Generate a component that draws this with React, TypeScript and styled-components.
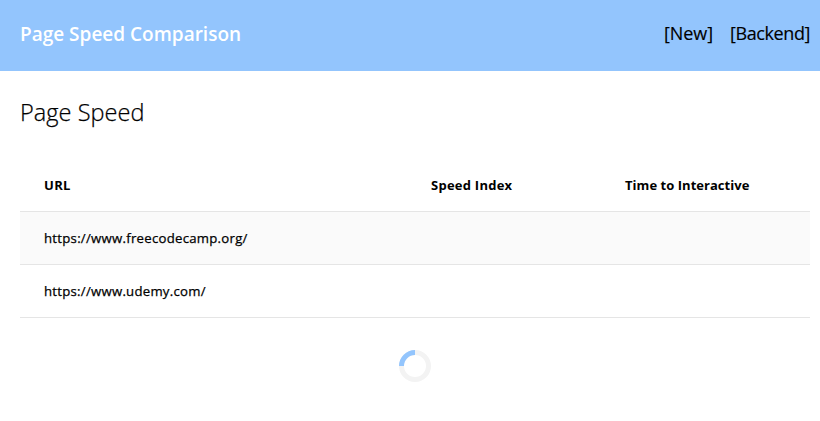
import React from "react";
import styled, { createGlobalStyle } from "styled-components";

const GlobalStyle = createGlobalStyle`
  * { box-sizing: border-box; }
  body { margin: 0; background: #fff; color: #000; font-family: "Open Sans", "Noto Sans", sans-serif; overflow: hidden; }
`;
const Header = styled.header`
  display: flex; justify-content: space-between; align-items: center;
  height: 71px; padding: 0 10px 4px 20px; background: #93c5fd;
`;
const Label = styled.span<{ $tracking?: number }>`
  white-space: nowrap;
  letter-spacing: ${(p) => p.$tracking ?? 0}px;
`;
const Brand = styled(Label)`color: #fff; font-size: 19px; font-weight: 600; line-height: 28px;`;
const Nav = styled.nav`display: flex; gap: 17px; padding-bottom: 1px;`;
const NavLink = styled(Label)`
  font-size: 18px; line-height: 28px; -webkit-text-stroke: 0.15px currentColor;
`;
const Main = styled.main`padding: 25px 10px 0 20px;`;
const Title = styled.h1`
  margin: 0 0 31px; font-size: 23.5px; font-weight: 300; line-height: 32px;
  letter-spacing: 0.05px; -webkit-text-stroke: 0.25px currentColor;
`;
const Row = styled.div<{ $shade?: boolean }>`
  display: grid; grid-template-columns: 387px 194px 1fr; align-items: center;
  height: 53px; padding: 0 24px; border-bottom: 1px solid #e5e5e5;
  background: ${(p) => (p.$shade ? "#fafafa" : "#fff")};
`;
const HeadCell = styled(Label)`font-size: 13px; font-weight: 700;`;
const Cell = styled(Label)`
  font-size: 13.2px; font-weight: 400; -webkit-text-stroke: 0.25px currentColor;
`;
const Loading = styled.div`display: flex; justify-content: center; padding-top: 32px;`;

export default function App() {
  return (
    <>
      <GlobalStyle />
      <Header>
        <Brand $tracking={0}>Page Speed Comparison</Brand>
        <Nav><NavLink $tracking={-0.1}>[New]</NavLink><NavLink $tracking={-0.4}>[Backend]</NavLink></Nav>
      </Header>
      <Main>
        <Title>Page Speed</Title>
        <Row>
          <HeadCell $tracking={0.3}>URL</HeadCell>
          <HeadCell $tracking={0.25}>Speed Index</HeadCell>
          <HeadCell $tracking={0.04}>Time to Interactive</HeadCell>
        </Row>
        <Row $shade><Cell $tracking={0.26}>https://www.freecodecamp.org/</Cell></Row>
        <Row><Cell $tracking={0.25}>https://www.udemy.com/</Cell></Row>
        <Loading>
          <svg width="32" height="32" viewBox="0 0 32 32" fill="none" strokeWidth="5">
            <circle cx="16" cy="16" r="13.5" stroke="#f3f3f3" />
            <path d="M2.5 16A13.5 13.5 0 0 1 16 2.5" stroke="#93c5fd" />
          </svg>
        </Loading>
      </Main>
    </>
  );
}
